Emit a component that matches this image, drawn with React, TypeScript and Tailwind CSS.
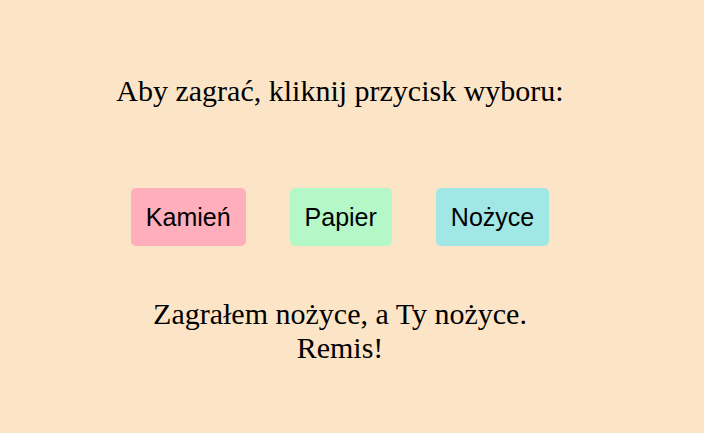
export default function App() {
  const choices = [
    { label: "Kamień", color: "bg-[#FFAEBC]" },
    { label: "Papier", color: "bg-[#B4F8C8]" },
    { label: "Nożyce", color: "bg-[#A0E7E5]" },
  ];

  return (
    <div className="min-h-[433px] w-full bg-[#FBE5C6]">
      <div className="flex w-[680px] flex-col items-center pt-[74px] font-['Liberation_Serif',serif] text-black">
        <h1 className="text-[30px] leading-[34px]">Aby zagrać, kliknij przycisk wyboru:</h1>

        <div className="mt-[80px] flex justify-center gap-[44px]">
          {choices.map((c) => (
            <button
              key={c.label}
              className={`${c.color} rounded-[5px] px-[15px] py-[15px] font-['Liberation_Sans',Arial,sans-serif] text-[25px] leading-[28px] text-black`}
            >
              {c.label}
            </button>
          ))}
        </div>

        <p className="mt-[51px] text-center text-[30px] leading-[34px]">
          Zagrałem nożyce, a Ty nożyce.
          <br />
          Remis!
        </p>
      </div>
    </div>
  );
}
